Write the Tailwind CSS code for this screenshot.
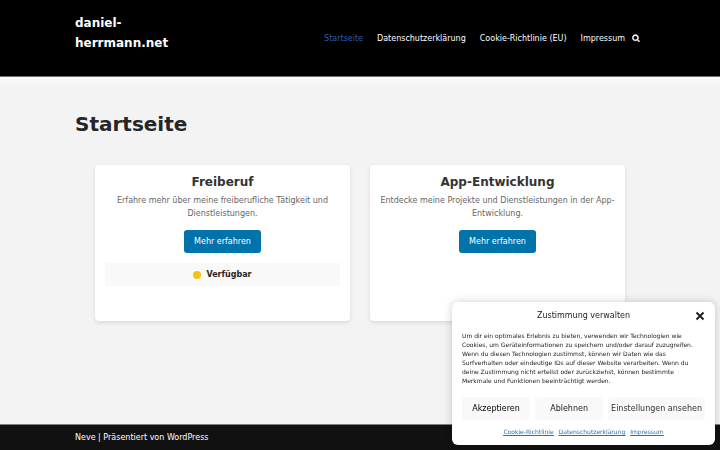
<!DOCTYPE html>
<html lang="de">
<head>
    <meta charset="UTF-8">
    <meta name="viewport" content="width=device-width, initial-scale=1.0">
    <title>Startseite – daniel-herrmann.net</title>
    <script src="https://cdn.jsdelivr.net/npm/@tailwindcss/browser@4"></script>
</head>
<body class="min-h-screen flex flex-col bg-[#f3f3f3] text-[#272626] text-[8px] leading-[13px] font-['DejaVu_Sans',sans-serif]">

    <!-- Header -->
    <header class="bg-black text-white border-b border-[#737070]">
        <div class="w-full max-w-[600px] mx-auto px-[15px] pt-[13px] pb-[23px] flex items-center justify-between">
            <a href="/" class="w-[120px] text-[12px] leading-[20px] font-bold">daniel-<br>herrmann.net</a>
            <nav class="flex items-center gap-[14px] pt-[10px] pr-[5px]">
                <a href="/" class="text-[#2f5aae]">Startseite</a>
                <a href="#">Datenschutzerklärung</a>
                <a href="#">Cookie-Richtlinie (EU)</a>
                <div class="flex items-center gap-[7px]">
                    <a href="#">Impressum</a>
                    <button type="button" aria-label="Suche">
                        <svg class="size-2" viewBox="0 0 1792 1792" fill="currentColor" stroke="currentColor" stroke-width="90"><path d="M1216 832q0-185-131.500-316.500t-316.500-131.500-316.500 131.500-131.500 316.500 131.500 316.500 316.500 131.500 316.500-131.500 131.500-316.500zm512 832q0 52-38 90t-90 38q-54 0-90-38l-343-342q-179 124-399 124-143 0-273.500-55.500t-225-150-150-225-55.500-273.500 55.500-273.500 150-225 225-150 273.500-55.500 273.500 55.500 225 150 150 225 55.500 273.500q0 220-124 399l343 343q37 37 37 90z"/></svg>
                    </button>
                </div>
            </nav>
        </div>
    </header>

    <!-- Inhalt -->
    <div class="grow bg-[linear-gradient(#fbfbfb,#f3f3f3_10px)]">
        <main class="w-full max-w-[600px] mx-auto px-[15px] pt-[34px]">
            <h1 class="text-[20px] leading-[26px] font-bold">Startseite</h1>

            <div class="grid grid-cols-2 gap-5 px-5 mt-7">
                <section class="min-h-[156px] bg-white rounded-[4px] shadow-[0_2px_4px_rgba(0,0,0,0.1)] p-[10px] text-center">
                    <h2 class="text-[12px] leading-[14px] font-bold text-[#333333]">Freiberuf</h2>
                    <p class="mt-[5px] text-[#666666]">Erfahre mehr über meine freiberufliche Tätigkeit und Dienstleistungen.</p>
                    <a href="#" class="inline-block mt-[10px] px-[10px] py-[5px] bg-[#0073aa] text-white rounded-[3px]">Mehr erfahren</a>
                    <div class="mt-[10px] py-[5px] flex items-center justify-center gap-[5px] bg-[#f9f9f9] font-bold">
                        <span class="size-2 rounded-full bg-[#f5c211]"></span>
                        <span>Verfügbar</span>
                    </div>
                </section>

                <section class="min-h-[156px] bg-white rounded-[4px] shadow-[0_2px_4px_rgba(0,0,0,0.1)] p-[10px] text-center">
                    <h2 class="text-[12px] leading-[14px] font-bold text-[#333333]">App-Entwicklung</h2>
                    <p class="mt-[5px] text-[#666666]">Entdecke meine Projekte und Dienstleistungen in der App-Entwicklung.</p>
                    <a href="#" class="inline-block mt-[10px] px-[10px] py-[5px] bg-[#0073aa] text-white rounded-[3px]">Mehr erfahren</a>
                </section>
            </div>
        </main>
    </div>

    <!-- Footer -->
    <footer class="bg-[#111111] text-white border-t border-[#808080]">
        <div class="w-full max-w-[600px] mx-auto px-[15px] py-[6px]">
            <p><a href="#">Neve</a> | Präsentiert von <a href="#">WordPress</a></p>
        </div>
    </footer>

    <!-- Cookie-Banner -->
    <div role="dialog" aria-labelledby="cookie-title" class="fixed right-[5px] bottom-[5px] w-[263px] px-[10px] pt-[7px] pb-[9px] bg-white text-[#222222] rounded-[6px] shadow-[0_0_8px_rgba(0,0,0,0.2)]">
        <div class="grid grid-cols-[10px_1fr_10px] items-center">
            <h2 id="cookie-title" class="col-start-2 text-center">Zustimmung verwalten</h2>
            <button type="button" aria-label="Dialog schließen" class="justify-self-end">
                <svg class="size-[10px]" viewBox="0 0 10 10" fill="none" stroke="currentColor" stroke-width="2"><path d="M1.500 1.500l7 7M8.500 1.500l-7 7"/></svg>
            </button>
        </div>
        <p class="mt-[9px] text-[6px] leading-[9px]">Um dir ein optimales Erlebnis zu bieten, verwenden wir Technologien wie Cookies, um Geräteinformationen zu speichern und/oder darauf zuzugreifen. Wenn du diesen Technologien zustimmst, können wir Daten wie das Surfverhalten oder eindeutige IDs auf dieser Website verarbeiten. Wenn du deine Zustimmung nicht erteilst oder zurückziehst, können bestimmte Merkmale und Funktionen beeinträchtigt werden.</p>
        <div class="flex gap-[5px] mt-3">
            <button type="button" class="grow basis-[68px] h-[23px] bg-[#f9f9f9] text-black rounded-[3px]">Akzeptieren</button>
            <button type="button" class="grow basis-[68px] h-[23px] bg-[#f9f9f9] rounded-[3px]">Ablehnen</button>
            <button type="button" class="h-[23px] px-[3px] bg-[#f9f9f9] text-[#333333] rounded-[3px] whitespace-nowrap">Einstellungen ansehen</button>
        </div>
        <div class="flex justify-center gap-[5px] mt-[7px] text-[6px] leading-[9px] text-[#1e73be] underline">
            <a href="#">Cookie-Richtlinie</a>
            <a href="#">Datenschutzerklärung</a>
            <a href="#">Impressum</a>
        </div>
    </div>

</body>
</html>
